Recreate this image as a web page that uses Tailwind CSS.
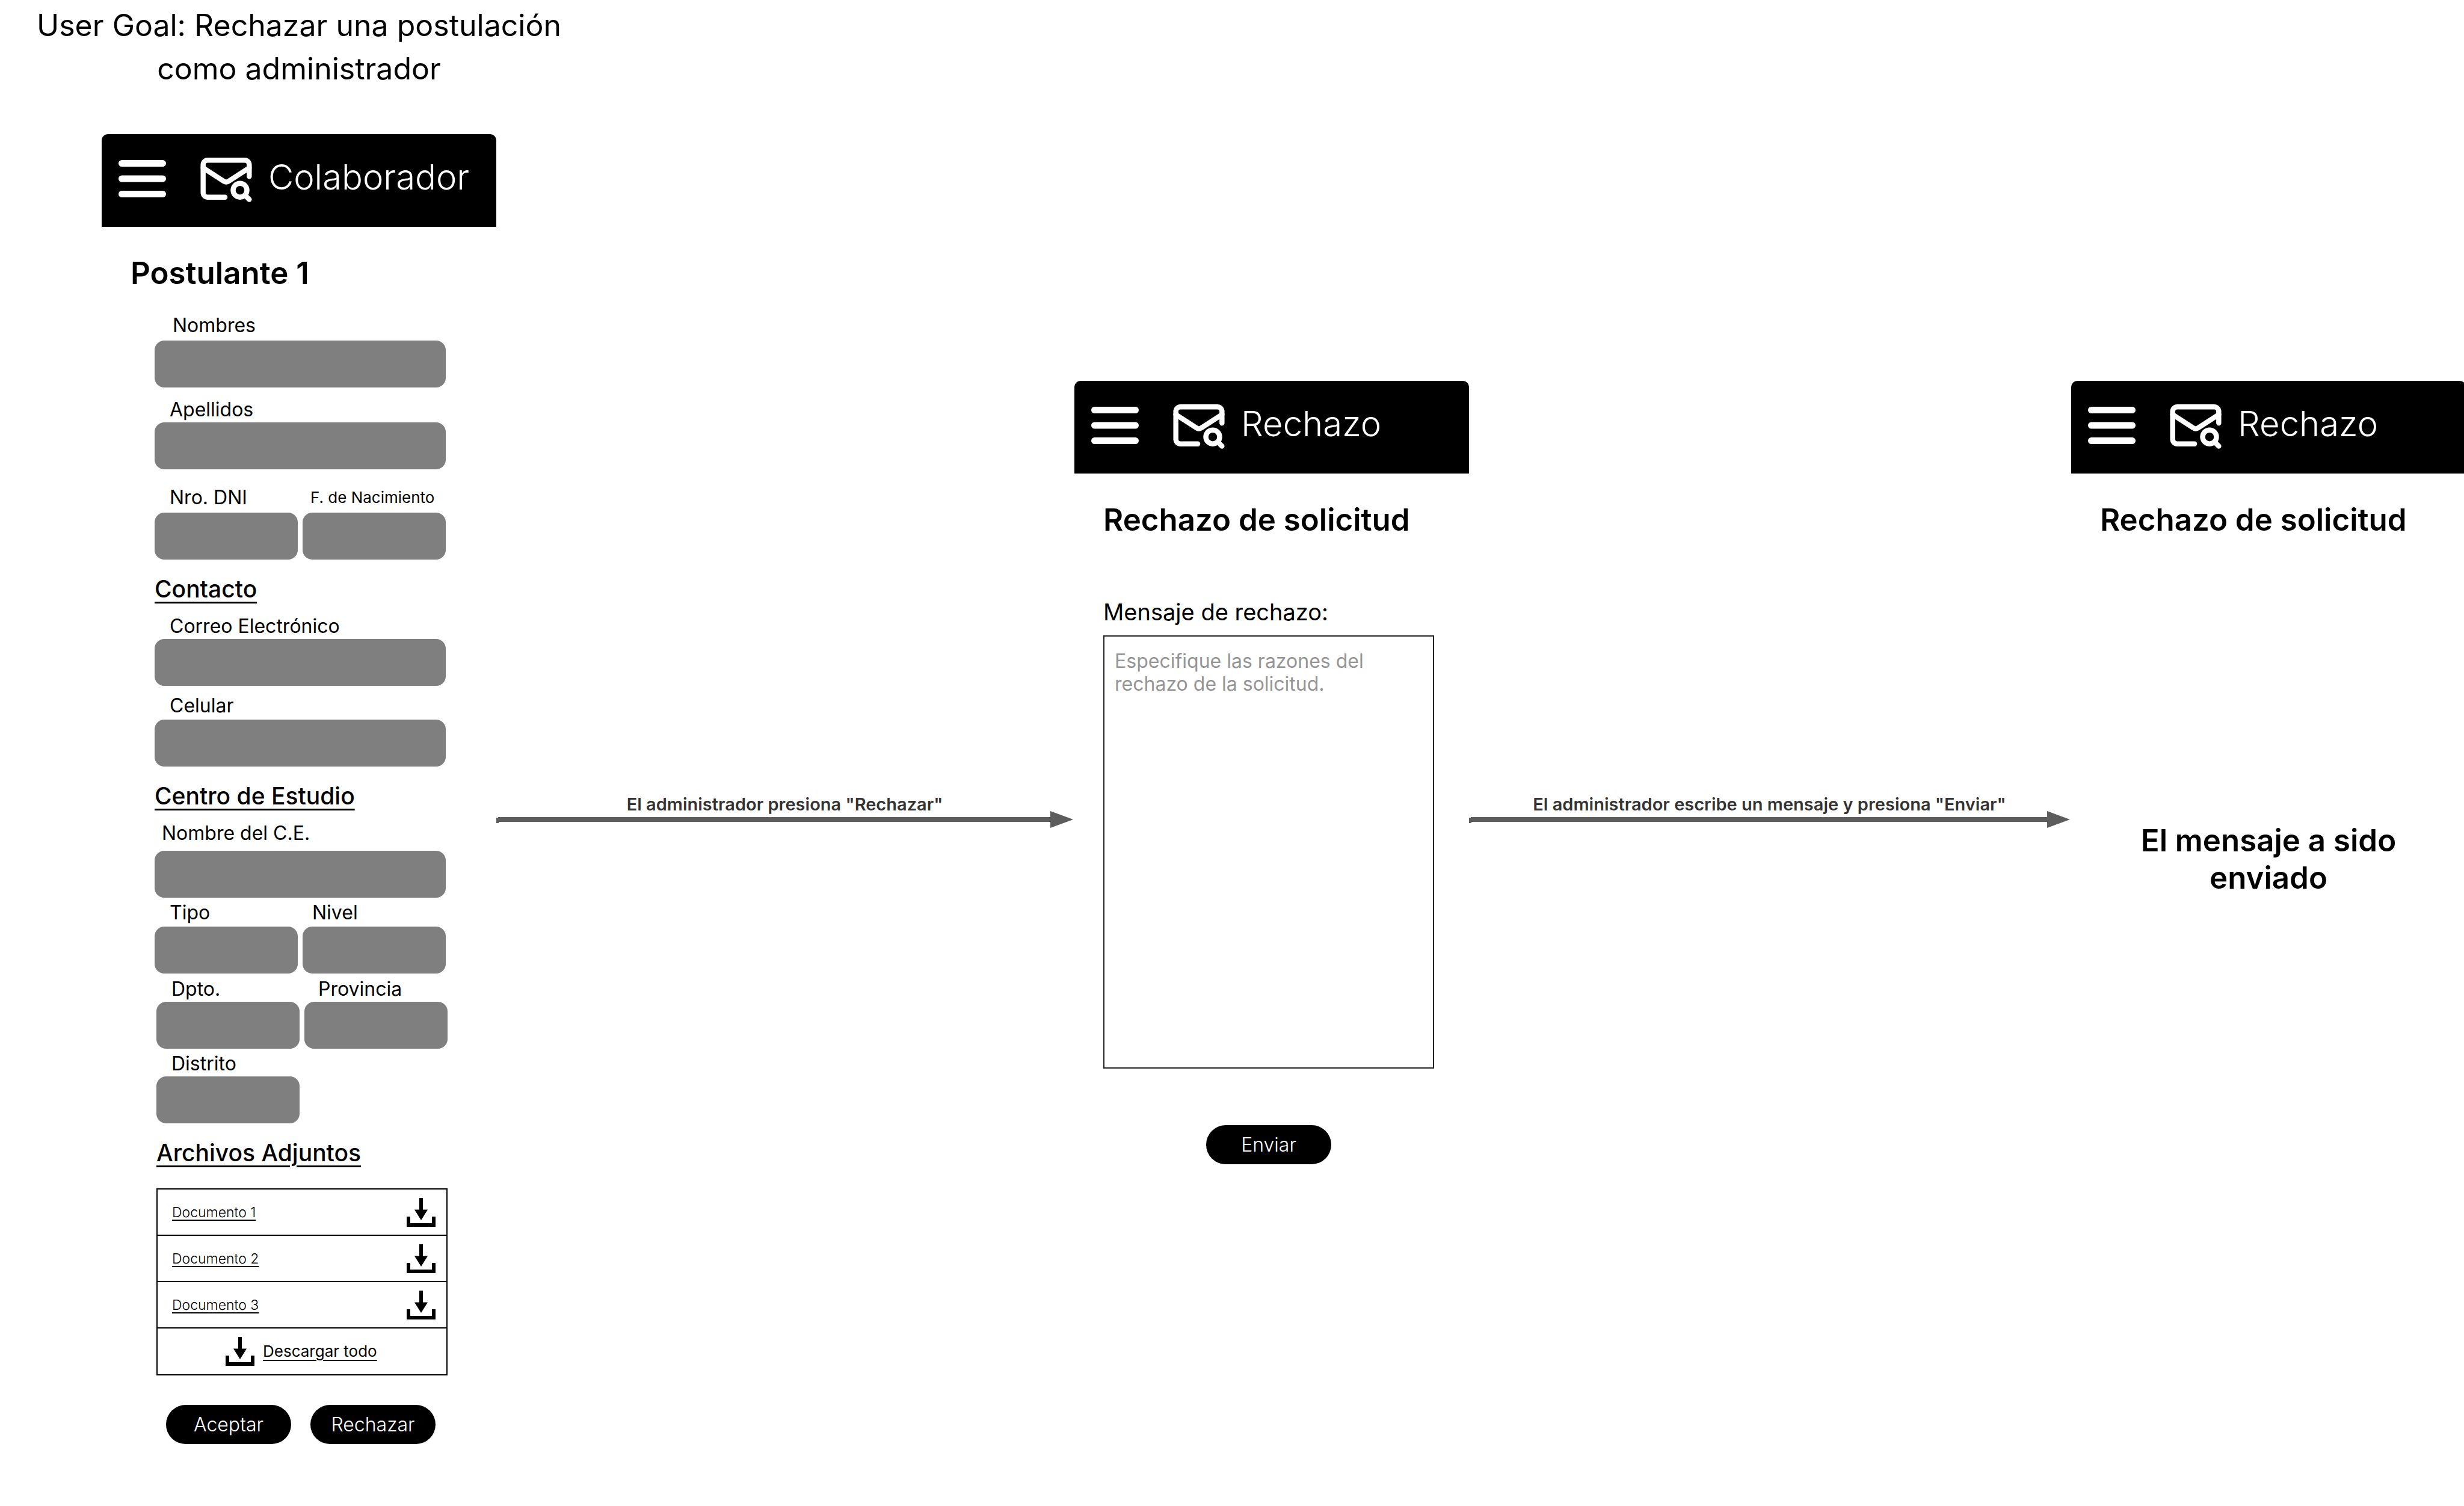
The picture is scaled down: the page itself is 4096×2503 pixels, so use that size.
<!DOCTYPE html>
<html lang="es">
<head>
<meta charset="utf-8">
<meta name="viewport" content="width=device-width, initial-scale=1">
<title>User Goal: Rechazar una postulación</title>
<script src="https://cdn.jsdelivr.net/npm/@tailwindcss/browser@4"></script>
</head>
<body class="min-h-screen overflow-x-hidden bg-white font-[Inter,sans-serif] text-black">

<!-- Shared icons -->
<svg class="hidden" aria-hidden="true">
  <symbol id="menu" viewBox="0 0 79 62">
    <path d="M5.5 5.5h68M5.5 31h68M5.5 56.5h68" fill="none" stroke="currentColor" stroke-width="11" stroke-linecap="round"/>
  </symbol>
  <symbol id="mail-search" viewBox="0 0 24 24">
    <g fill="none" stroke="currentColor" stroke-width="2.2" stroke-linecap="round" stroke-linejoin="round">
      <path d="M22 11V6a2 2 0 0 0-2-2H4a2 2 0 0 0-2 2v12c0 1.100.9 2 2 2h7.500"/>
      <path d="m22 7.300-8.970 5.800a1.940 1.940 0 0 1-2.060 0L2 7.300"/>
      <circle cx="18" cy="17" r="3"/>
      <path d="m22 21-1.500-1.500"/>
    </g>
  </symbol>
  <symbol id="download" viewBox="0 0 48 48">
    <path fill="currentColor" d="M21 0h6v19.500h8L24 37 13 19.500h8zM0 31h6v11h36V31h6v17H0z"/>
  </symbol>
  <symbol id="tail" viewBox="0 0 5 28">
    <path fill="currentColor" d="M0 11h3v-1h2v8H4v2H0z"/>
  </symbol>
  <symbol id="head" viewBox="0 0 38 28">
    <path fill="currentColor" d="M0 0l38 14L0 28z"/>
  </symbol>
</svg>

<h1 class="w-[994px] pt-[6px] text-center text-[50px] leading-[72px]">User Goal: Rechazar una postulación<br>como administrador</h1>

<main class="-mr-[3px] mt-[73px] flex items-start pl-[169px]">

  <!-- Applicant details -->
  <section class="w-[656px] shrink-0">
    <header class="flex h-[154px] items-center rounded-t-[10px] bg-black pb-[6px] pl-[28px] text-white">
      <button type="button" aria-label="Menú"><svg class="h-[62px] w-[79px]"><use href="#menu"/></svg></button>
      <svg class="ml-[54px] size-[92px]" aria-hidden="true"><use href="#mail-search"/></svg>
      <span class="ml-[24px] pb-[6px] text-[58px] leading-[68px] font-light">Colaborador</span>
    </header>
    <h2 class="mt-[46px] ml-[48px] text-[51px] leading-[62px] font-semibold">Postulante 1</h2>

    <form class="mt-[37px]">
      <div class="ml-[88px] w-[484px]">
        <div class="flex flex-col gap-[6px]">
          <label for="nombres" class="pl-[30px] text-[32px] leading-[38px]">Nombres</label>
          <input id="nombres" type="text" class="h-[78px] w-full rounded-[16px] bg-[#7f7f7f] px-6 text-[32px]">
        </div>
        <div class="mt-[18px] flex flex-col gap-[2px]">
          <label for="apellidos" class="pl-[25px] text-[32px] leading-[38px]">Apellidos</label>
          <input id="apellidos" type="text" class="h-[78px] w-full rounded-[16px] bg-[#7f7f7f] px-6 text-[32px]">
        </div>
        <div class="mt-[28px] grid grid-cols-2 gap-x-2">
          <div class="flex flex-col gap-[6px]">
            <label for="dni" class="pl-[25px] text-[32px] leading-[38px]">Nro. DNI</label>
            <input id="dni" type="text" class="h-[78px] w-full rounded-[16px] bg-[#7f7f7f] px-6 text-[32px]">
          </div>
          <div class="flex flex-col gap-[6px]">
            <label for="nacimiento" class="pl-[13px] text-[26px] leading-[38px]">F. de Nacimiento</label>
            <input id="nacimiento" type="text" class="h-[78px] w-full rounded-[16px] bg-[#7f7f7f] px-6 text-[32px]">
          </div>
        </div>

        <h3 class="mt-[27px] text-[39px] leading-[44px] font-medium underline decoration-[3px] underline-offset-[7px]">Contacto</h3>
        <div class="mt-[21px] flex flex-col gap-[2px]">
          <label for="correo" class="pl-[25px] text-[32px] leading-[38px]">Correo Electrónico</label>
          <input id="correo" type="email" class="h-[78px] w-full rounded-[16px] bg-[#7f7f7f] px-6 text-[32px]">
        </div>
        <div class="mt-[14px] flex flex-col gap-[4px]">
          <label for="celular" class="pl-[25px] text-[32px] leading-[38px]">Celular</label>
          <input id="celular" type="tel" class="h-[78px] w-full rounded-[16px] bg-[#7f7f7f] px-6 text-[32px]">
        </div>

        <h3 class="mt-[27px] text-[39px] leading-[44px] font-medium underline decoration-[3px] underline-offset-[7px]">Centro de Estudio</h3>
        <div class="mt-[21px] flex flex-col gap-[10px]">
          <label for="centro" class="pl-[12px] text-[32px] leading-[38px]">Nombre del C.E.</label>
          <input id="centro" type="text" class="h-[78px] w-full rounded-[16px] bg-[#7f7f7f] px-6 text-[32px]">
        </div>
        <div class="mt-[6px] grid grid-cols-2 gap-x-2">
          <div class="flex flex-col gap-[4px]">
            <label for="tipo" class="pl-[25px] text-[32px] leading-[38px]">Tipo</label>
            <input id="tipo" type="text" class="h-[78px] w-full rounded-[16px] bg-[#7f7f7f] px-6 text-[32px]">
          </div>
          <div class="flex flex-col gap-[4px]">
            <label for="nivel" class="pl-[16px] text-[32px] leading-[38px]">Nivel</label>
            <input id="nivel" type="text" class="h-[78px] w-full rounded-[16px] bg-[#7f7f7f] px-6 text-[32px]">
          </div>
        </div>
      </div>

      <div class="ml-[91px] w-[484px]">
        <div class="mt-[7px] grid grid-cols-2 gap-x-2 gap-y-[6px]">
          <div class="flex flex-col gap-[2px]">
            <label for="dpto" class="pl-[25px] text-[32px] leading-[38px]">Dpto.</label>
            <input id="dpto" type="text" class="h-[78px] w-full rounded-[16px] bg-[#7f7f7f] px-6 text-[32px]">
          </div>
          <div class="flex flex-col gap-[2px]">
            <label for="provincia" class="pl-[23px] text-[32px] leading-[38px]">Provincia</label>
            <input id="provincia" type="text" class="h-[78px] w-full rounded-[16px] bg-[#7f7f7f] px-6 text-[32px]">
          </div>
          <div class="flex flex-col gap-[2px]">
            <label for="distrito" class="pl-[25px] text-[32px] leading-[38px]">Distrito</label>
            <input id="distrito" type="text" class="h-[78px] w-full rounded-[16px] bg-[#7f7f7f] px-6 text-[32px]">
          </div>
        </div>

        <h3 class="mt-[27px] text-[39px] leading-[44px] font-medium underline decoration-[3px] underline-offset-[7px]">Archivos Adjuntos</h3>
        <ul class="mt-[37px] divide-y-2 divide-black border-2 border-black">
          <li class="flex h-[77px] items-center justify-between pr-[18px] pl-[24px]">
            <a href="#doc1" class="text-[23px] leading-[26px] font-light underline decoration-2 underline-offset-[4px]">Documento 1</a>
            <button type="button" aria-label="Descargar Documento 1"><svg class="size-[48px]"><use href="#download"/></svg></button>
          </li>
          <li class="flex h-[77px] items-center justify-between pr-[18px] pl-[24px]">
            <a href="#doc2" class="text-[23px] leading-[26px] font-light underline decoration-2 underline-offset-[4px]">Documento 2</a>
            <button type="button" aria-label="Descargar Documento 2"><svg class="size-[48px]"><use href="#download"/></svg></button>
          </li>
          <li class="flex h-[77px] items-center justify-between pr-[18px] pl-[24px]">
            <a href="#doc3" class="text-[23px] leading-[26px] font-light underline decoration-2 underline-offset-[4px]">Documento 3</a>
            <button type="button" aria-label="Descargar Documento 3"><svg class="size-[48px]"><use href="#download"/></svg></button>
          </li>
          <li class="flex h-[76px] items-center pl-[113px]">
            <a href="#todo" class="flex items-center gap-[14px] text-[26px] leading-[30px] underline decoration-2 underline-offset-[5px]">
              <svg class="size-[48px]" aria-hidden="true"><use href="#download"/></svg>
              <span>Descargar todo</span>
            </a>
          </li>
        </ul>
      </div>

      <div class="mt-[49px] ml-[107px] flex gap-8">
        <button type="button" class="h-[65px] w-[208px] rounded-full bg-black text-[32px] font-light text-white">Aceptar</button>
        <button type="button" class="h-[65px] w-[208px] rounded-full bg-black text-[32px] font-light text-white">Rechazar</button>
      </div>
    </form>
  </section>

  <div class="mt-[1097px] min-w-0 grow-[961] basis-0 pr-[2px]">
    <p class="text-center text-[29px] leading-[34px] font-semibold text-[#333]">El administrador presiona "Rechazar"</p>
    <div class="-mt-[6px] flex items-center text-[#5d5d5d]">
      <svg class="h-[28px] w-[5px]" aria-hidden="true"><use href="#tail"/></svg>
      <div class="h-[8px] grow bg-[#5d5d5d]"></div>
      <svg class="h-[28px] w-[38px]" aria-hidden="true"><use href="#head"/></svg>
    </div>
  </div>

  <!-- Rejection message -->
  <section class="mt-[410px] w-[656px] shrink-0">
    <header class="flex h-[154px] items-center rounded-t-[10px] bg-black pb-[6px] pl-[28px] text-white">
      <button type="button" aria-label="Menú"><svg class="h-[62px] w-[79px]"><use href="#menu"/></svg></button>
      <svg class="ml-[54px] size-[92px]" aria-hidden="true"><use href="#mail-search"/></svg>
      <span class="ml-[24px] pb-[6px] text-[58px] leading-[68px] font-light">Rechazo</span>
    </header>
    <h2 class="mt-[46px] ml-[48px] text-[51px] leading-[62px] font-semibold">Rechazo de solicitud</h2>
    <form class="mt-[99px] ml-[48px] flex w-[550px] flex-col items-center">
      <label for="mensaje" class="self-start text-[38px] leading-[46px]">Mensaje de rechazo:</label>
      <textarea id="mensaje" class="mt-[16px] h-[720px] w-full resize-none border-2 border-[#222] pt-[22px] pr-[60px] pl-[17px] text-[32px] leading-[38px] placeholder:text-[#959595]" placeholder="Especifique las razones del rechazo de la solicitud."></textarea>
      <button type="button" class="mt-[94px] h-[65px] w-[208px] rounded-full bg-black text-[32px] font-light text-white">Enviar</button>
    </form>
  </section>

  <div class="mt-[1097px] min-w-0 grow-[1001] basis-0 pr-[2px]">
    <p class="text-center text-[29px] leading-[34px] font-semibold text-[#333]">El administrador escribe un mensaje y presiona "Enviar"</p>
    <div class="-mt-[6px] flex items-center text-[#5d5d5d]">
      <svg class="h-[28px] w-[5px]" aria-hidden="true"><use href="#tail"/></svg>
      <div class="h-[8px] grow bg-[#5d5d5d]"></div>
      <svg class="h-[28px] w-[38px]" aria-hidden="true"><use href="#head"/></svg>
    </div>
  </div>

  <!-- Confirmation -->
  <section class="mt-[410px] w-[656px] shrink-0">
    <header class="flex h-[154px] items-center rounded-t-[10px] bg-black pb-[6px] pl-[28px] text-white">
      <button type="button" aria-label="Menú"><svg class="h-[62px] w-[79px]"><use href="#menu"/></svg></button>
      <svg class="ml-[54px] size-[92px]" aria-hidden="true"><use href="#mail-search"/></svg>
      <span class="ml-[24px] pb-[6px] text-[58px] leading-[68px] font-light">Rechazo</span>
    </header>
    <h2 class="mt-[46px] ml-[48px] text-[51px] leading-[62px] font-semibold">Rechazo de solicitud</h2>
    <p class="mt-[471px] text-center text-[51px] leading-[62px] font-semibold">El mensaje a sido<br>enviado</p>
  </section>
</main>
</body>
</html>
